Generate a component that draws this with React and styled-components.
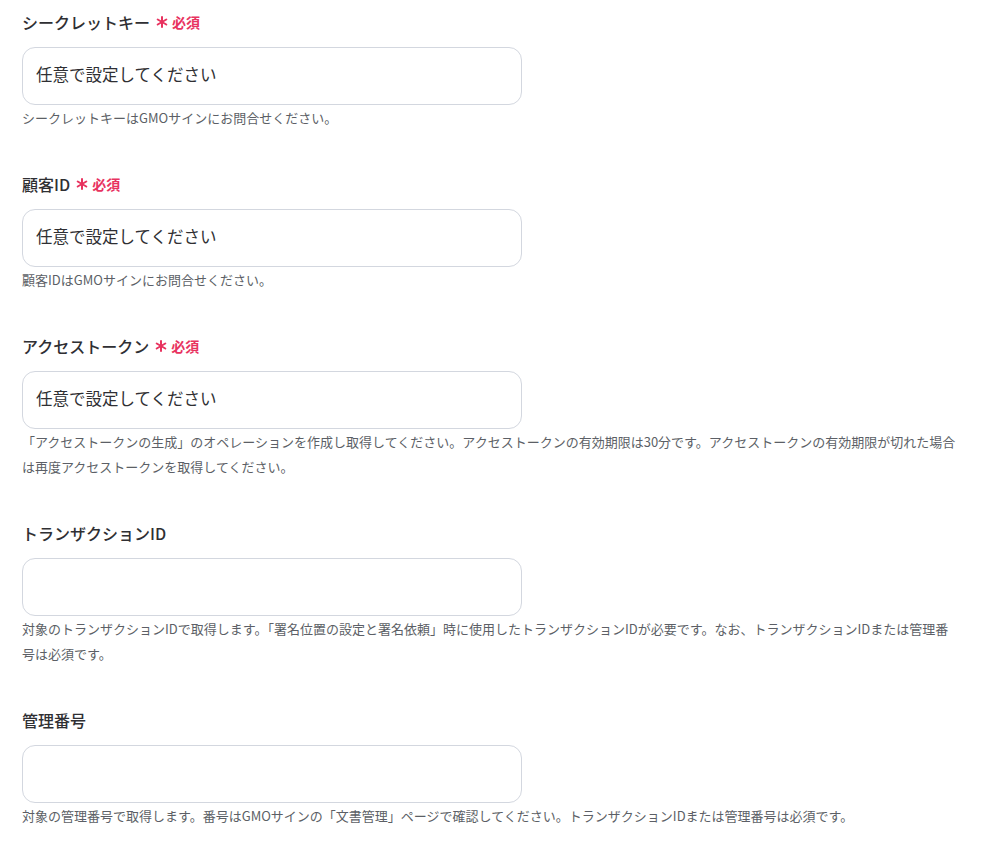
import React from 'react'
import styled, { createGlobalStyle } from 'styled-components'

const GlobalStyle = createGlobalStyle`
  body {
    margin: 0;
    background: #ffffff;
    font-family: "Noto Sans CJK JP", "Noto Sans", sans-serif;
    color: #2f2f33;
  }
`

const Page = styled.div`
  padding: 10px 22px 0;
  width: 936px;
`

const Field = styled.div`
  display: flex;
  flex-direction: column;
  margin-bottom: 42px;
  &:last-child {
    margin-bottom: 0;
  }
`

const LabelRow = styled.div`
  display: flex;
  align-items: center;
  gap: 6px;
  height: 24px;
  margin-bottom: 13px;
`

const Label = styled.span`
  font-size: 16px;
  font-weight: 500;
  color: #2f2f33;
`

const Required = styled.span`
  display: flex;
  align-items: center;
  gap: 4px;
  color: #e8335f;
  font-size: 14px;
  font-weight: 700;
`

const Input = styled.input`
  box-sizing: border-box;
  width: 500px;
  height: 58px;
  padding: 0 13px 4px;
  border: 1px solid #d3d7df;
  border-radius: 13px;
  font-family: inherit;
  font-size: 16.5px;
  color: #2f2f33;
  outline: none;
  background: #fff;
  &::placeholder {
    color: #2f2f33;
  }
`

const Help = styled.p`
  margin: 0;
  font-size: 13px;
  line-height: 25px;
  color: #5c5f66;
`

const Asterisk = () => (
  <svg width="12" height="12" viewBox="0 0 12 12">
    <g stroke="#e8335f" strokeWidth="2" strokeLinecap="round">
      <line x1="6" y1="1" x2="6" y2="11" />
      <line x1="1.7" y1="3.5" x2="10.3" y2="8.5" />
      <line x1="1.7" y1="8.5" x2="10.3" y2="3.5" />
    </g>
  </svg>
)

const fields = [
  {
    label: 'シークレットキー',
    required: true,
    placeholder: '任意で設定してください',
    help: 'シークレットキーはGMOサインにお問合せください。',
  },
  {
    label: '顧客ID',
    required: true,
    placeholder: '任意で設定してください',
    help: '顧客IDはGMOサインにお問合せください。',
  },
  {
    label: 'アクセストークン',
    required: true,
    placeholder: '任意で設定してください',
    help: '「アクセストークンの生成」のオペレーションを作成し取得してください。アクセストークンの有効期限は30分です。アクセストークンの有効期限が切れた場合は再度アクセストークンを取得してください。',
  },
  {
    label: 'トランザクションID',
    required: false,
    placeholder: '',
    help: '対象のトランザクションIDで取得します。「署名位置の設定と署名依頼」時に使用したトランザクションIDが必要です。なお、トランザクションIDまたは管理番号は必須です。',
  },
  {
    label: '管理番号',
    required: false,
    placeholder: '',
    help: '対象の管理番号で取得します。番号はGMOサインの「文書管理」ページで確認してください。トランザクションIDまたは管理番号は必須です。',
  },
]

const App = () => {
  return (
    <Page>
      <GlobalStyle />
      {fields.map((f) => (
        <Field key={f.label}>
          <LabelRow>
            <Label>{f.label}</Label>
            {f.required && (
              <Required>
                <Asterisk />
                必須
              </Required>
            )}
          </LabelRow>
          <Input placeholder={f.placeholder} />
          <Help>{f.help}</Help>
        </Field>
      ))}
    </Page>
  )
}

export default App
